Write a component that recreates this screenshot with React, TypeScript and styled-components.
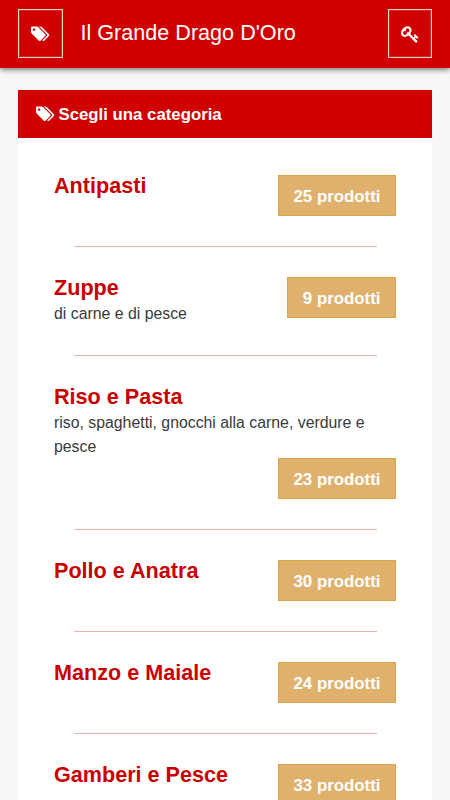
import React from 'react';
import styled, { createGlobalStyle } from 'styled-components';

const GlobalStyle = createGlobalStyle`
  * { box-sizing: border-box; }
  body { margin: 0; background: #f7f7f7; font-family: "Liberation Sans", Arial, sans-serif; overflow: hidden; }
`;
const Page = styled.div`
  height: 800px;
  overflow: hidden;
`;
const Header = styled.header`
  height: 68px;
  padding: 9px 18px 0;
  display: flex;
  align-items: flex-start;
  background: #d00000;
  box-shadow: 0 1px 6px rgba(0, 0, 0, 0.65);
`;
const IconButton = styled.button<{ $width: number }>`
  width: ${p => p.$width}px;
  height: 49px;
  padding: 1px 0 0;
  display: flex;
  align-items: center;
  justify-content: center;
  border: 1px solid #e6d2d2;
  box-shadow: inset 0 0 0 1px rgba(255, 255, 255, 0.15);
  background: transparent;
  color: #fff;
`;
const Title = styled.h1`
  flex: 1;
  margin: 0 0 0 17.5px;
  font-size: 21.6px;
  line-height: 47px;
  font-weight: 400;
  color: #fff;
`;
const Card = styled.main`
  margin: 22px 18px 0;
  background: #fff;
`;
const CardHeader = styled.h2`
  margin: 0;
  height: 48px;
  padding: 1px 0 0 18px;
  display: flex;
  align-items: center;
  gap: 4px;
  background: #d00000;
  color: #fff;
  font-size: 16.8px;
  line-height: 21px;
`;
const List = styled.div`
  padding: 37px 36px 0;
`;
const Category = styled.section<{ $height: number }>`
  display: flow-root;
  height: ${p => p.$height}px;
`;
const Row = styled.div`
  display: flex;
  justify-content: space-between;
  align-items: flex-start;
`;
const StackedRow = styled.div`
  display: flow-root;
  height: 72px;
`;
const Name = styled.h3`
  margin: -3px 0 0;
  font-size: 21.6px;
  line-height: 27px;
  color: #c80000;
`;
const Description = styled.p`
  margin: 0;
  padding-top: 1px;
  font-size: 15.84px;
  line-height: 24px;
  color: #3a3a3a;
`;
const Badge = styled.span`
  display: block;
  width: max-content;
  height: 41px;
  margin: 0 0 0 auto;
  padding: 0 14.5px;
  border: 1px solid #dba445;
  background: #e0b16c;
  color: #fff;
  font-size: 16.85px;
  line-height: 41px;
  font-weight: 700;
`;
const Divider = styled.hr`
  margin: 30px 19px 30px 20px;
  border: 0;
  height: 1px;
  background: #f0b0b2;
`;

const Tags = () => (
  <svg width="18.5" height="17" viewBox="0 0 1920 1664" fill="currentColor" aria-hidden="true">
    <path d="M448 320q0-53-37.500-90.500t-90.500-37.500-90.500 37.500-37.500 90.500 37.500 90.500 90.500 37.500 90.500-37.500 37.500-90.500zm1067 576q0 53-37 90l-491 492q-39 37-91 37-53 0-90-37l-715-716q-38-37-64.500-101t-26.500-117v-416q0-52 38-90t90-38h416q53 0 117 26.500t102 64.500l715 714q37 39 37 91zm384 0q0 53-37 90l-491 492q-39 37-91 37-36 0-59-14t-53-45l470-470q37-37 37-90 0-52-37-91l-715-714q-38-38-102-64.500t-117-26.500h224q53 0 117 26.500t102 64.500l715 714q37 39 37 91z" />
  </svg>
);

const Key = () => (
  <svg width="18.5" height="18.5" viewBox="0 0 1792 1792" fill="currentColor" aria-hidden="true">
    <path d="M832 512q0-80-56-136t-136-56-136 56-56 136q0 42 19 83-41-19-83-19-80 0-136 56t-56 136 56 136 136 56 136-56 56-136q0-42-19-83 41 19 83 19 80 0 136-56t56-136zm851 704q0 17-49 66t-66 49q-9 0-28.500-16t-36.500-33-38.500-40-24.500-26l-96 96 220 220q28 28 28 68 0 42-39 81t-81 39q-40 0-68-28l-671-671q-176 131-365 131-163 0-265.500-102.500t-102.500-265.500q0-160 95-313t248-248 313-95q163 0 265.500 102.500t102.500 265.500q0 189-131 365l355 355 96-96q-3-3-26-24.500t-40-38.500-33-36.500-16-28.500q0-17 49-66t66-49q13 0 23 10 6 6 46 44.500t82 79.500 86.500 86 73 78 28.500 41z" />
  </svg>
);

type Item = { name: string; text?: string; count: number; stacked?: boolean };
const items: Item[] = [
  { name: 'Antipasti', count: 25 },
  { name: 'Zuppe', text: 'di carne e di pesce', count: 9 },
  { name: 'Riso e Pasta', text: 'riso, spaghetti, gnocchi alla carne, verdure e pesce', count: 23, stacked: true },
  { name: 'Pollo e Anatra', count: 30 },
  { name: 'Manzo e Maiale', count: 24 },
  { name: 'Gamberi e Pesce', count: 33 },
];

export default function App() {
  return (
    <Page>
      <GlobalStyle />
      <Header>
        <IconButton $width={45}><Tags /></IconButton>
        <Title>Il Grande Drago D'Oro</Title>
        <IconButton $width={44}><Key /></IconButton>
      </Header>
      <Card>
        <CardHeader><Tags />Scegli una categoria</CardHeader>
        <List>
          {items.map((item, i) => (
            <React.Fragment key={item.name}>
              <Category $height={item.stacked ? 113 : item.text ? 48 : 41}>
                {item.stacked ? (
                  <>
                    <StackedRow>
                      <Name>{item.name}</Name>
                      <Description>{item.text}</Description>
                    </StackedRow>
                    <Badge>{item.count} prodotti</Badge>
                  </>
                ) : (
                  <Row>
                    <div>
                      <Name>{item.name}</Name>
                      {item.text && <Description>{item.text}</Description>}
                    </div>
                    <Badge>{item.count} prodotti</Badge>
                  </Row>
                )}
              </Category>
              {i < items.length - 1 && <Divider />}
            </React.Fragment>
          ))}
        </List>
      </Card>
    </Page>
  );
}
